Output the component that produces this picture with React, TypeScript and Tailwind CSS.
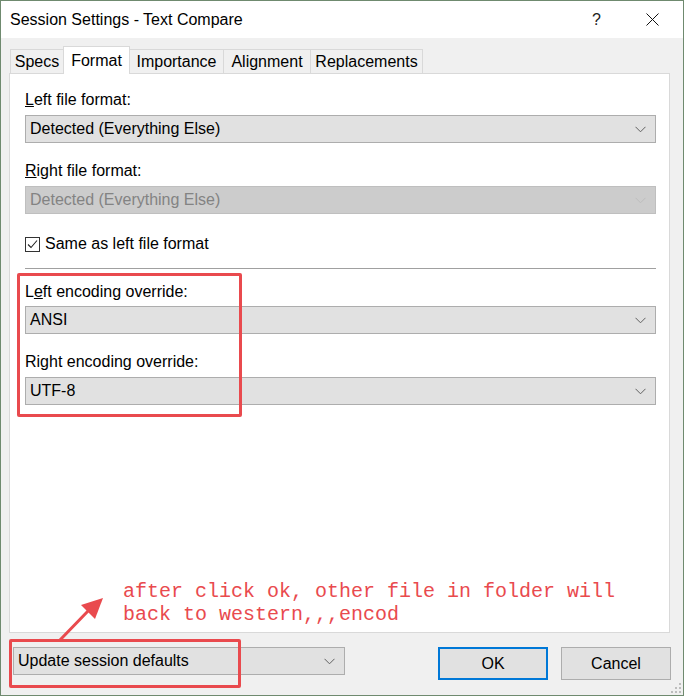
import React from "react";

const font = { fontFamily: '"Liberation Sans", Arial, sans-serif' };

const Chevron = ({ disabled }: { disabled?: boolean }) => (
  <svg width="11" height="7" viewBox="0 0 11 7" className="shrink-0">
    <path d="M0.5 0.8 L5.5 5.8 L10.5 0.8" fill="none" stroke={disabled ? "#bdbdbd" : "#606060"} strokeWidth="1" />
  </svg>
);

const Dropdown = ({ value, disabled, className = "" }: { value: string; disabled?: boolean; className?: string }) => (
  <div
    className={`flex h-[28px] items-center justify-between border pl-[4px] pr-[9px] text-[16px] ${
      disabled ? "border-[#bfbfbf] bg-[#cccccc] text-[#838383]" : "border-[#adadad] bg-[#e1e1e1] text-black"
    } ${className}`}
  >
    <span>{value}</span>
    <Chevron disabled={disabled} />
  </div>
);

const tabs = [
  { name: "Specs", w: "w-[54px]" },
  { name: "Format", w: "w-[67px]" },
  { name: "Importance", w: "w-[95px]" },
  { name: "Alignment", w: "w-[88px]" },
  { name: "Replacements", w: "w-[113px]" },
];

export default function App() {
  return (
    <div style={font} className="relative flex h-[696px] w-[684px] flex-col overflow-hidden border border-[#6f8a6f] bg-[#f0f0f0] text-black">
      {/* title bar */}
      <div className="flex h-[37px] items-center bg-white pl-[9px] text-[16px]">
        <span className="flex-1">Session Settings - Text Compare</span>
        <span className="mr-[45px] text-[16px] text-[#222]">?</span>
        <svg width="13" height="13" viewBox="0 0 13 13" className="mr-[24px]">
          <path d="M0.5 0.5 L12.5 12.5 M12.5 0.5 L0.5 12.5" stroke="#111" strokeWidth="1" />
        </svg>
      </div>

      <div className="flex flex-1 flex-col px-[8px] pt-[8px]">
        {/* tabs */}
        <div className="flex h-[27px] items-end pl-[2px]">
          {tabs.map((t, i) =>
            i === 1 ? (
              <div
                key={t.name}
                className={`${t.w} relative z-10 -mb-px -ml-px flex h-[28px] items-center justify-center border border-b-0 border-[#d9d9d9] bg-white text-[16px]`}
              >
                {t.name}
              </div>
            ) : (
              <div
                key={t.name}
                className={`${t.w} -ml-px flex h-[24px] items-center justify-center border border-b-0 border-[#d9d9d9] bg-[#f0f0f0] pt-px text-[16px]`}
              >
                {t.name}
              </div>
            )
          )}
        </div>

        {/* panel */}
        <div className="flex h-[560px] w-[661px] flex-col border border-[#d9d9d9] bg-white pl-[15px] pr-[13px] pt-[16px] text-[16px]">
          <div className="h-[20px] leading-[20px]">
            <u>L</u>eft file format:
          </div>
          <Dropdown value="Detected (Everything Else)" className="mt-[5px]" />
          <div className="mt-[18px] h-[20px] leading-[20px]">
            <u>R</u>ight file format:
          </div>
          <Dropdown value="Detected (Everything Else)" disabled className="mt-[5px]" />
          <div className="mt-[20px] flex h-[20px] items-center gap-[5px] leading-[20px]">
            <svg width="15" height="15" viewBox="0 0 15 15">
              <rect x="0.5" y="0.5" width="14" height="14" fill="white" stroke="#333" />
              <path d="M3 7.5 L6 10.5 L12 3.5" fill="none" stroke="#222" strokeWidth="1.1" />
            </svg>
            <span>Same as left file format</span>
          </div>
          <div className="mt-[14px] h-px bg-[#a0a0a0]" />
          <div className="mt-[13px] h-[20px] leading-[20px]">
            L<u>e</u>ft encoding override:
          </div>
          <Dropdown value="ANSI" className="mt-[4px]" />
          <div className="mt-[18px] h-[20px] leading-[20px]">
            Ri<u>g</u>ht encoding override:
          </div>
          <Dropdown value="UTF-8" className="mt-[5px]" />
        </div>

        {/* bottom row */}
        <div className="mt-[14px] flex items-start">
          <Dropdown value="Update session defaults" className="ml-[4px] w-[332px]" />
          <div className="ml-[93px] flex h-[33px] w-[110px] items-center justify-center border-2 border-[#0078d7] bg-[#e1e1e1] text-[16px]">
            OK
          </div>
          <div className="ml-[13px] flex h-[33px] w-[110px] items-center justify-center border border-[#adadad] bg-[#e1e1e1] text-[16px]">
            Cancel
          </div>
        </div>
      </div>

      {/* resize grip */}
      <svg width="11" height="11" viewBox="0 0 11 11" className="absolute bottom-[1px] right-[1px]">
        {[
          [8, 0],
          [8, 4],
          [4, 4],
          [8, 8],
          [4, 8],
          [0, 8],
        ].map(([x, y], i) => (
          <rect key={i} x={x} y={y} width="2" height="2" fill="#bdbdbd" />
        ))}
      </svg>

      {/* annotations */}
      <div className="pointer-events-none absolute left-[16px] top-[272px] h-[144px] w-[225px] rounded-[2px] border-[3px] border-[#e94a4e]" />
      <div className="pointer-events-none absolute left-[8px] top-[638px] h-[49px] w-[232px] rounded-[2px] border-[3px] border-[#e94a4e]" />
      <svg className="pointer-events-none absolute left-[50px] top-[590px]" width="60" height="55" viewBox="0 0 60 55">
        <path d="M9 49 L38 19" stroke="#e94a4e" strokeWidth="3" strokeLinecap="round" />
        <path d="M52 7 L30 14 L44 28 Z" fill="#e94a4e" />
      </svg>
      <div
        className="pointer-events-none absolute left-[122px] top-[579px] text-[20px] leading-[23px] text-[#e94a4e]"
        style={{ fontFamily: '"Liberation Mono", "Courier New", monospace' }}
      >
        <div>after click ok, other file in folder will</div>
        <div>back to western,,,encod</div>
      </div>
    </div>
  );
}
